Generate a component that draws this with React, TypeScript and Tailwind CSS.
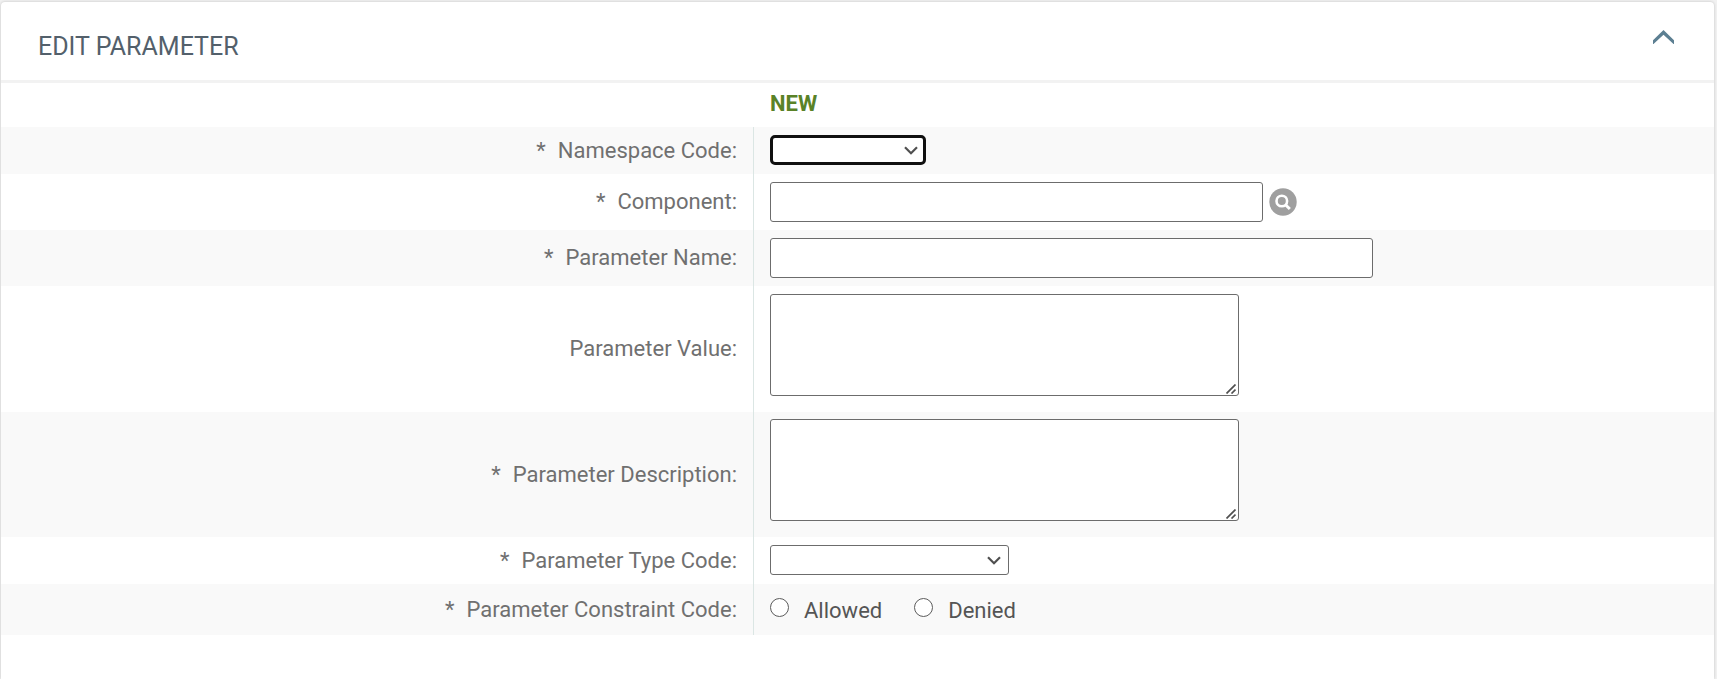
import React, { useState } from "react";
import { clsx } from "clsx";

const control = "border border-[#6c6c6c] rounded-[3px] bg-white text-[22px] text-[#555555]";

function Row({ label, htmlFor, required = false, shaded = false, className, children }: {
    label: string;
    htmlFor: string;
    required?: boolean;
    shaded?: boolean;
    className?: string;
    children: React.ReactNode;
}) {
    return (
        <div className={clsx("flex", shaded && "bg-[#f9f9f9]")}>
            <div className="w-[43.9%] shrink-0 flex items-center justify-end pr-4">
                <label id={`${htmlFor}-label`} htmlFor={htmlFor} className="flex gap-3 text-[22px] leading-6 text-[#707070]">
                    {required && <span>*</span>}
                    <span>{label}:</span>
                </label>
            </div>
            <div className={clsx("flex-1 min-w-0 flex items-center border-l border-[#dbe6e4] px-4", className)}>
                {children}
            </div>
        </div>
    );
}

function Select({ id, className, children }: { id: string; className?: string; children?: React.ReactNode }) {
    return (
        <div className="relative">
            <select id={id} className={clsx("block appearance-none h-[30px] pl-2 pr-8 outline-none", className)}>
                <option value=""></option>
                {children}
            </select>
            <svg className="absolute right-2 top-[11px] pointer-events-none" width="14" height="9" viewBox="0 0 14 9" fill="none" stroke="#505050" strokeWidth="2.2">
                <path d="M1 1.2 L7 7.2 L13 1.2" />
            </svg>
        </div>
    );
}

function TextArea({ id }: { id: string }) {
    return (
        <div className="relative w-[469px]">
            <textarea id={id} className={clsx("block w-full h-[102px] resize-none p-2 outline-none", control)} />
            <svg className="absolute right-[3px] bottom-[2px] pointer-events-none" width="10" height="10" viewBox="0 0 10 10" fill="none" stroke="#505050" strokeWidth="1.7">
                <path d="M0.5 9.5 L9.5 0.5 M5.5 9.5 L9.5 5.5" />
            </svg>
        </div>
    );
}

function Radio({ value, checked, onChange }: { value: string; checked: boolean; onChange: (value: string) => void }) {
    return (
        <label className="flex items-center gap-[15px] text-[22px] leading-6 text-[#555555]">
            <input
                type="radio"
                name="constraint"
                value={value}
                checked={checked}
                onChange={() => onChange(value)}
                className="appearance-none size-[19px] mb-[6px] rounded-full border border-[#5c5c5c] bg-white checked:border-[6px]"
            />
            {value}
        </label>
    );
}

export default function App() {
    const [open, setOpen] = useState(true);
    const [constraint, setConstraint] = useState("");

    return (
        <div className="min-h-screen flex bg-[#f1f1f1] pt-[2px] pl-px pr-[3px] font-['Roboto',sans-serif]">
            <section className="flex-1 min-w-0 bg-white rounded-t-[4px] shadow-[0_0_3px_rgba(0,0,0,0.2)]">
                <header className="h-[81px] flex items-start justify-between border-b-[3px] border-[#f2f2f2] pl-[37px] pr-10">
                    <h1 className="pt-[29px] text-[25px] leading-8 text-[#53606b]">EDIT PARAMETER</h1>
                    <button type="button" aria-label="Toggle section" aria-expanded={open} onClick={() => setOpen(!open)} className="mt-7">
                        <svg className={clsx("block", !open && "rotate-180")} width="21" height="14" viewBox="0 0 21 14" fill="#5c7f92">
                            <path d="M10.5 0 L21 10.3 V14 H20.5 L10.5 4.8 L0.5 14 H0 V10.3 Z" />
                        </svg>
                    </button>
                </header>

                {open && (
                    <form>
                        <div className="flex h-11">
                            <div className="w-[43.9%] shrink-0" />
                            <h2 className="pl-[17px] pt-[9px] text-[22px] leading-6 font-bold text-[#5a8227]">NEW</h2>
                        </div>

                        <Row label="Namespace Code" htmlFor="namespace" required shaded className="pt-2 pb-[9px]">
                            <Select id="namespace" className="w-[156px] border-3 border-[#101010] rounded-[5px] bg-white">
                                <option>KC-SYS</option>
                            </Select>
                        </Row>
                        <Row label="Component" htmlFor="component" required className="py-2 gap-[6px]">
                            <input id="component" type="text" className={clsx("w-[493px] h-10 px-2 outline-none", control)} />
                            <button type="button" aria-label="Search component">
                                <svg className="block" width="28" height="28" viewBox="0 0 28 28" fill="none">
                                    <circle cx="14" cy="14" r="13.7" fill="#9f9f9f" />
                                    <circle cx="12.8" cy="13" r="5.3" stroke="#ffffff" strokeWidth="2.6" />
                                    <path d="M16.5 16.7 L20.8 21" stroke="#ffffff" strokeWidth="3" />
                                </svg>
                            </button>
                        </Row>
                        <Row label="Parameter Name" htmlFor="name" required shaded className="py-2">
                            <input id="name" type="text" className={clsx("w-[603px] h-10 px-2 outline-none", control)} />
                        </Row>
                        <Row label="Parameter Value" htmlFor="value" className="pt-2 pb-4">
                            <TextArea id="value" />
                        </Row>
                        <Row label="Parameter Description" htmlFor="description" required shaded className="pt-[7px] pb-4">
                            <TextArea id="description" />
                        </Row>
                        <Row label="Parameter Type Code" htmlFor="type" required className="pt-2 pb-[9px]">
                            <Select id="type" className={clsx("w-[239px]", control)}>
                                <option>Config</option>
                            </Select>
                        </Row>
                        <Row label="Parameter Constraint Code" htmlFor="constraint" required shaded className="pt-[14px] pb-3">
                            <div id="constraint" role="radiogroup" aria-labelledby="constraint-label" className="flex gap-8">
                                <Radio value="Allowed" checked={constraint === "Allowed"} onChange={setConstraint} />
                                <Radio value="Denied" checked={constraint === "Denied"} onChange={setConstraint} />
                            </div>
                        </Row>
                    </form>
                )}
            </section>
        </div>
    );
}
